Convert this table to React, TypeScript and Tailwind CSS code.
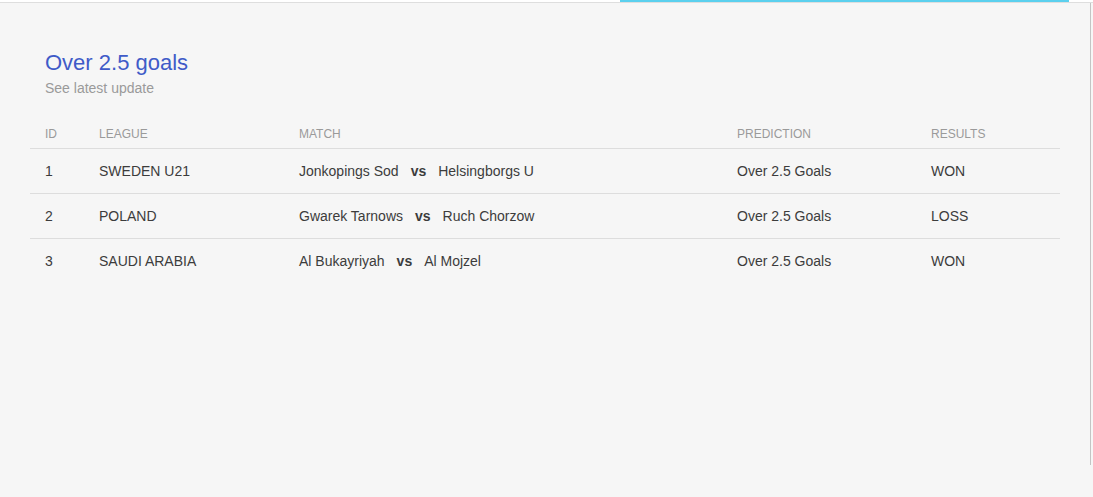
import React from "react";

const rows = [
  { id: 1, league: "SWEDEN U21", home: "Jonkopings Sod", away: "Helsingborgs U", prediction: "Over 2.5 Goals", result: "WON" },
  { id: 2, league: "POLAND", home: "Gwarek Tarnows", away: "Ruch Chorzow", prediction: "Over 2.5 Goals", result: "LOSS" },
  { id: 3, league: "SAUDI ARABIA", home: "Al Bukayriyah", away: "Al Mojzel", prediction: "Over 2.5 Goals", result: "WON" },
];

export default function App() {
  return (
    <div
      className="h-[497px] w-[1093px] overflow-hidden bg-[#f6f6f6] flex flex-col"
      style={{ fontFamily: '"Liberation Sans", Arial, sans-serif' }}
    >
      {/* top strip with progress bar */}
      <div className="relative h-[3px] shrink-0 bg-white border-b border-[#dedede]">
        <div className="absolute left-[620px] top-0 h-[2px] w-[449px] bg-[#5bd0ee]" />
      </div>

      <div className="flex flex-1">
        <div className="w-[1091px] h-[462px] border-r border-[#c4c4c4] px-[30px] pt-[46px]">
          <div className="px-[15px]">
            <h2 className="text-[22px] leading-[28px] text-[#3f5bc8]">Over 2.5 goals</h2>
            <p className="text-[14px] leading-[18px] mt-[2px] text-[#9a9a9a]">See latest update</p>
          </div>

          <table className="mt-[21px] w-[1030px] border-collapse text-left">
            <thead>
              <tr className="border-b border-[#dddddd] text-[12px] text-[#9a9a9a] uppercase">
                <th className="w-[54px] pl-[15px] pt-[2px] h-[30px] font-normal">ID</th>
                <th className="w-[200px] pl-[15px] pt-[2px] font-normal">League</th>
                <th className="w-[438px] pl-[15px] pt-[2px] font-normal">Match</th>
                <th className="w-[194px] pl-[15px] pt-[2px] font-normal">Prediction</th>
                <th className="pl-[15px] pt-[2px] font-normal">Results</th>
              </tr>
            </thead>
            <tbody className="text-[14px] text-[#3c3c3c]">
              {rows.map((r, i) => (
                <tr key={r.id} className={i < rows.length - 1 ? "border-b border-[#dddddd]" : ""}>
                  <td className="pl-[15px] pt-[2px] h-[45px]">{r.id}</td>
                  <td className="pl-[15px] pt-[2px]">{r.league}</td>
                  <td className="pl-[15px] pt-[2px]">
                    {r.home}
                    <span className="font-bold mx-[12px]">vs</span>
                    {r.away}
                  </td>
                  <td className="pl-[15px] pt-[2px]">{r.prediction}</td>
                  <td className="pl-[15px] pt-[2px]">{r.result}</td>
                </tr>
              ))}
            </tbody>
          </table>
        </div>
      </div>
    </div>
  );
}
